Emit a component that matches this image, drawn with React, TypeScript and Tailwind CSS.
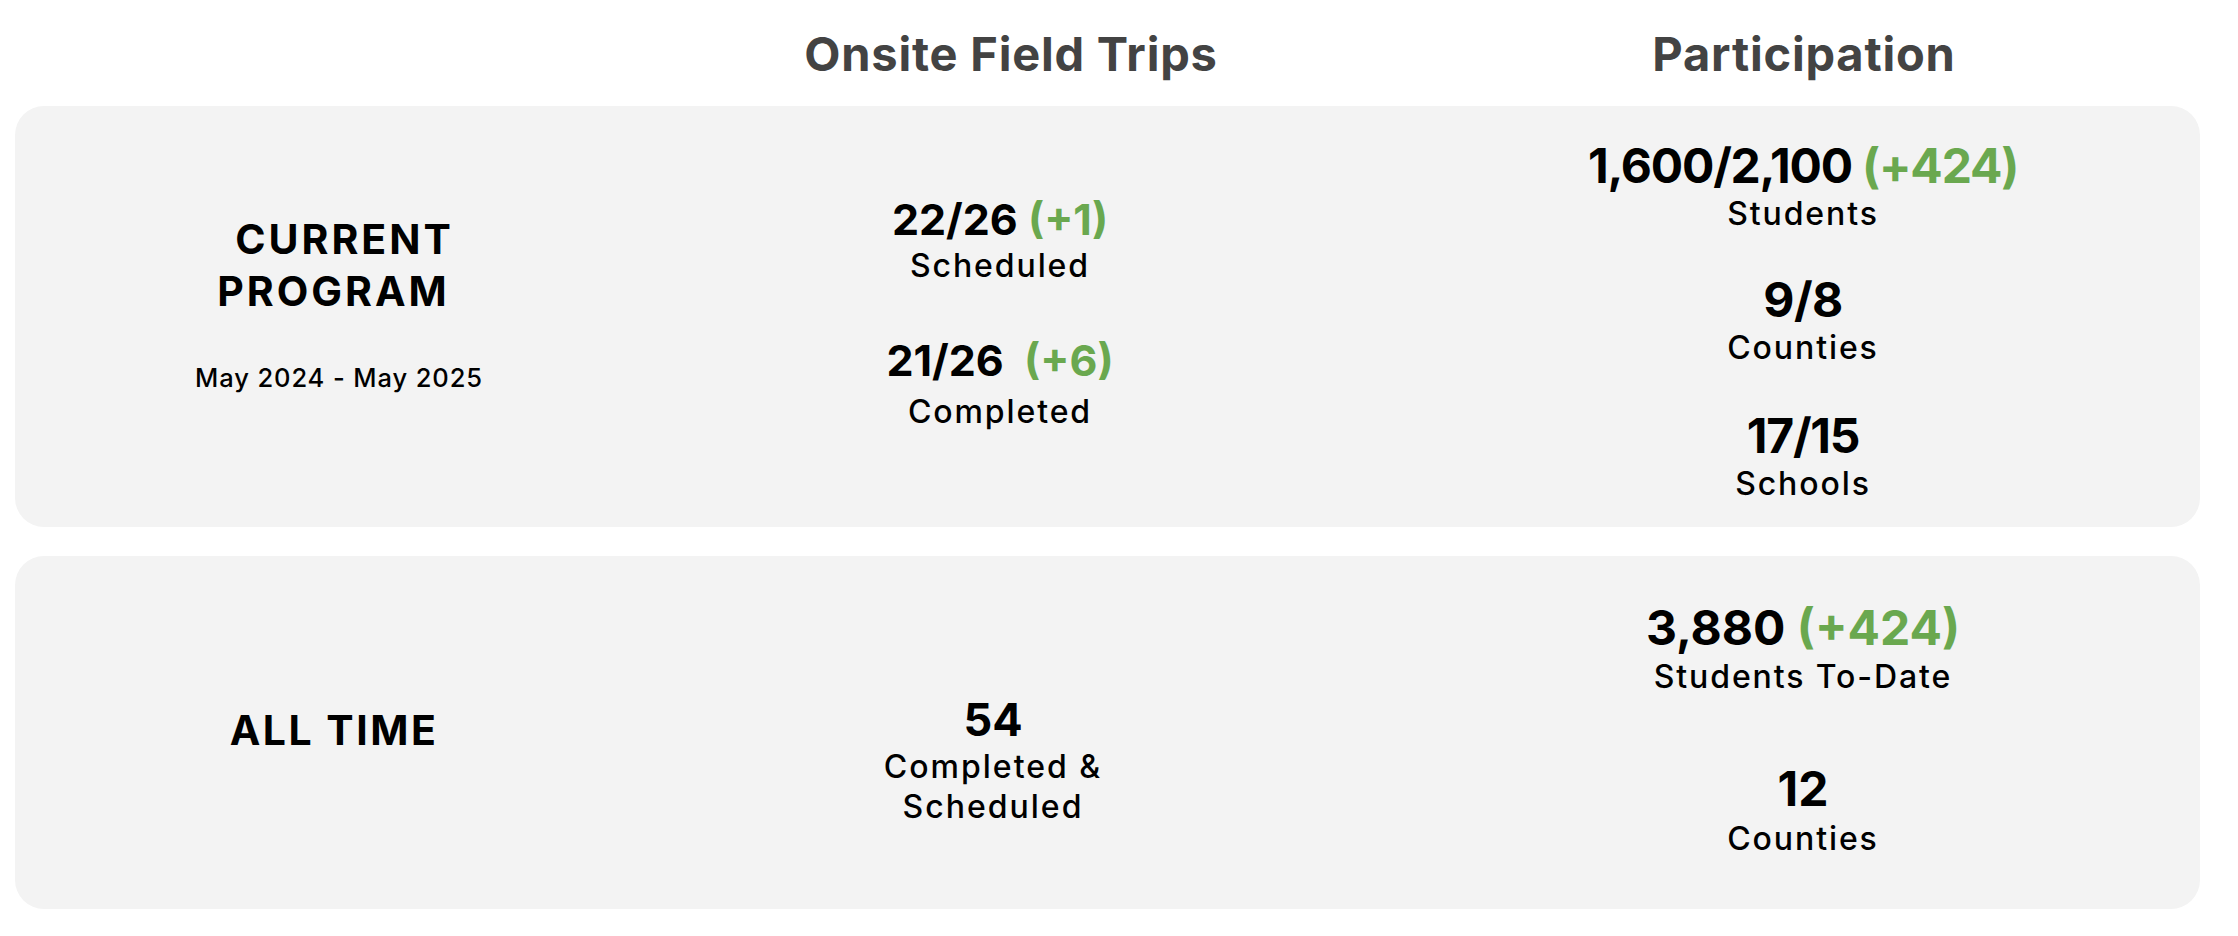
import React from "react";

const G = "text-[#6aa84f]";

function Num({
  children,
  size = "mid",
  className = "",
}: {
  children: React.ReactNode;
  size?: "mid" | "big";
  className?: string;
}) {
  return (
    <div
      className={
        (size === "big"
          ? "text-[48px] leading-[46px] font-bold text-black whitespace-pre "
          : "text-[43px] leading-[44px] font-bold text-black whitespace-pre ") + className
      }
    >
      {children}
    </div>
  );
}

function Label({ children, className = "" }: { children: React.ReactNode; className?: string }) {
  return (
    <div className={"text-[32px] leading-[36px] font-medium tracking-[1.9px] text-black " + className}>
      {children}
    </div>
  );
}

export default function App() {
  return (
    <div className="w-[2238px] h-[936px] bg-white font-['Inter',sans-serif] px-[15px] pt-[26px] box-border">
      {/* Header row */}
      <div className="w-[2185px] grid grid-cols-[648px_674px_1fr] text-[47px] leading-[56px] font-bold tracking-[0.8px] text-[#434343] text-center">
        <div />
        <div className="pl-[22px]">Onsite Field Trips</div>
        <div className="pl-[71px]">Participation</div>
      </div>

      {/* Current program card */}
      <div className="mt-[24px] w-[2185px] h-[421px] rounded-[29px] bg-[#f3f3f3] grid grid-cols-[648px_674px_1fr] text-center">
        <div className="flex flex-col items-center pt-[107px]">
          <div className="text-[41px] leading-[52px] font-bold tracking-[3px] text-black">
            <div className="pl-[11px]">CURRENT</div>
            <div className="pr-[11px]">PROGRAM</div>
          </div>
          <div className="mt-[46px] text-[25.5px] leading-[30px] font-medium tracking-[0.9px] text-black">
            May 2024 - May 2025
          </div>
        </div>

        <div className="flex flex-col items-center pt-[91px]">
          <Num>
            22/26 <span className={G}>(+1)</span>
          </Num>
          <Label className="mt-[7px]">Scheduled</Label>
          <div className="mt-[54px]">
            <Num>
              21/26  <span className={G}>(+6)</span>
            </Num>
          </div>
          <Label className="mt-[12px]">Completed</Label>
        </div>

        <div className="flex flex-col items-center pt-[37px] pl-[69px]">
          <Num size="big" className="tracking-[-1.2px]">
            1,600/2,100 <span className={G}>(+424)</span>
          </Num>
          <Label className="mt-[7px]">Students</Label>
          <div className="mt-[45px]">
            <Num size="big" className="tracking-[-0.5px]">9/8</Num>
          </div>
          <Label className="mt-[7px]">Counties</Label>
          <div className="mt-[47px]">
            <Num size="big" className="tracking-[-1.2px]">17/15</Num>
          </div>
          <Label className="mt-[7px]">Schools</Label>
        </div>
      </div>

      {/* All time card */}
      <div className="mt-[29px] w-[2185px] h-[353px] rounded-[29px] bg-[#f3f3f3] grid grid-cols-[648px_674px_1fr] text-center">
        <div className="flex flex-col items-center pt-[148px]">
          <div className="text-[41px] leading-[52px] font-bold tracking-[2.5px] text-black pr-[10px]">ALL TIME</div>
        </div>

        <div className="flex flex-col items-center pt-[141px] pr-[14px]">
          <div className="text-[45px] leading-[46px] font-bold text-black">54</div>
          <div className="mt-[4px] text-[32px] leading-[40px] font-medium tracking-[2px] text-black">
            <div>Completed &amp;</div>
            <div>Scheduled</div>
          </div>
        </div>

        <div className="flex flex-col items-center pt-[49px] pl-[69px]">
          <Num size="big">
            3,880 <span className={G}>(+424)</span>
          </Num>
          <Label className="mt-[8px]">Students To-Date</Label>
          <div className="mt-[71px]">
            <Num size="big">12</Num>
          </div>
          <Label className="mt-[9px]">Counties</Label>
        </div>
      </div>
    </div>
  );
}
